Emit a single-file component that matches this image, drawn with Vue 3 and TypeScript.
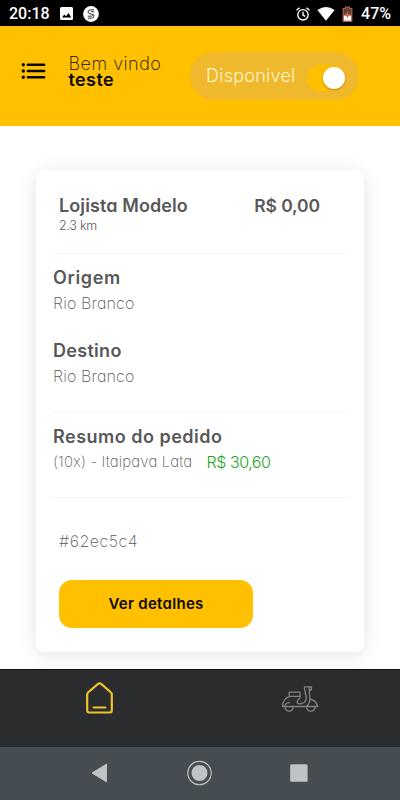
<script setup lang="ts">
import { ref } from 'vue'

interface Place {
  title: string
  value: string
}

const available = ref(true)
const places: Place[] = [
  { title: 'Origem', value: 'Rio Branco' },
  { title: 'Destino', value: 'Rio Branco' },
]
</script>

<template>
  <div class="screen">
    <div class="status">
      <span class="clock">20:18</span>
      <svg class="picture" width="13" height="13" viewBox="0 0 13 13">
        <rect width="13" height="13" rx="1.5" fill="#fff" />
        <path d="M2 10.5 4.3 7.4 6 9.3 8.5 6 11.3 10.5Z" fill="#000" />
      </svg>
      <svg class="badge" width="16" height="16" viewBox="0 0 16 16">
        <circle cx="8" cy="8" r="7.9" fill="#fff" />
        <path d="M11 3.8H7.4Q5 4 5 6 5.1 7.4 7 7.8L8.8 8.2Q10 8.6 9.6 9.6 9.2 10.2 8.4 10.2H4.8M11 5.7H7.9M4.8 12.2H8.4Q11 12 11 9.8 11 8.4 9.4 8" fill="none" stroke="#222" stroke-width=".9" />
      </svg>
      <span class="grow" />
      <svg width="14" height="14" viewBox="0 0 14 14" fill="none" stroke="#fff" stroke-width="1.4">
        <circle cx="7" cy="7.8" r="5.2" />
        <path d="M.5 3.2 3.6.7M13.5 3.2 10.4.7M7 4.8V8L9.2 9.4" />
      </svg>
      <svg class="wifi" width="18" height="14" viewBox="0 0 18 14">
        <path d="M.4 3Q9-2.8 17.6 3L9 13.8Z" fill="#fff" />
      </svg>
      <svg class="battery" width="11" height="16" viewBox="0 0 11 16">
        <path d="M3.5 1.2H7.5V2.5H9.8V15.3H1.2V2.5H3.5Z" fill="#504440" stroke="#b8593f" stroke-width="1.2" />
        <path d="M1.8 9.5H9.2V14.7H1.8Z" fill="#fff" />
        <path d="M5.5 5.2V11.5M2.6 8.7H8.4" stroke="#d85f3d" stroke-width="1.5" />
      </svg>
      <span class="percent">47%</span>
    </div>

    <header class="header">
      <svg class="menu" width="25" height="18" viewBox="0 0 25 18" fill="none" stroke="#0c0900" stroke-width="2.4" stroke-linecap="round">
        <path d="M6.8 2.7H23.2M6.8 9H23.2M6.8 15.3H23.2" />
        <path d="M2.3 2.7H2.31M2.3 9H2.31M2.3 15.3H2.31" stroke-width="3.4" />
      </svg>
      <div class="welcome">
        <span class="hello">Bem vindo</span>
        <strong class="user">teste</strong>
      </div>
      <div class="availability" @click="available = !available">
        <span class="availability-label">Disponivel</span>
        <span class="switch" :class="{ on: available }"><span class="knob" /></span>
      </div>
    </header>

    <main class="content">
      <article class="card">
        <div class="top">
          <div>
            <h2 class="title shop">Lojista Modelo</h2>
            <p class="distance">2.3 km</p>
          </div>
          <span class="title fee">R$ 0,00</span>
        </div>
        <section class="places">
          <div v-for="(place, i) in places" :key="place.title" class="place">
            <h3 class="title" :class="i === 0 ? 'origin' : 'destination'">{{ place.title }}</h3>
            <p class="text branch">{{ place.value }}</p>
          </div>
        </section>
        <section class="summary">
          <h3 class="title order">Resumo do pedido</h3>
          <p class="text line">
            <span class="item">(10x) - Itaipava Lata</span>
            <span class="price">R$ 30,60</span>
          </p>
        </section>
        <section class="bottom">
          <p class="text code">#62ec5c4</p>
          <button class="details">Ver detalhes</button>
        </section>
      </article>
    </main>

    <nav class="tabs">
      <div class="tab">
        <svg width="30" height="34" viewBox="0 0 30 34" fill="none" stroke="#efc22c" stroke-width="2.2" stroke-linecap="round" stroke-linejoin="round">
          <path d="M2.2 12.2Q2.2 11.2 3 10.5L13 1.9Q14.6.7 16.2 1.9L26 10.5Q26.8 11.2 26.8 12.2V28.5Q26.8 30.5 24.8 30.5H4.2Q2.2 30.5 2.2 28.5Z" />
          <path d="M8.6 25.5H20.4" />
        </svg>
      </div>
      <div class="tab">
        <svg width="38" height="28" viewBox="0 0 38 28" fill="none" stroke="#808283" stroke-width="1.3" stroke-linecap="round" stroke-linejoin="round">
          <path d="M8.2 7.2H19V11.3H8.2ZM9 11.3Q2 13 1.5 21.5H4M19 11.3V13Q16 15 16.2 17.8 17 19.5 21 18.5 25.5 17 25.2 12L23.5 4V1.8M24 1.8H30.7M28 1.8 28.8 13Q29 19 25.5 21.5H12.2M28.8 5H30.4V1.8M28.8 14Q35.5 15.5 36.8 21.5H34.2M4 21.5H12.2M25.5 21.5H34.2" />
          <path d="M4 21.5Q4.5 26.2 8.2 26.2 12 26.2 12.2 21.5M25.5 21.5Q25.8 26.2 29.8 26.2 33.8 26.2 34.2 21.5M4 21.5Q4.3 17.6 8.5 17.6" />
        </svg>
      </div>
    </nav>

    <div class="system">
      <svg width="17" height="20" viewBox="0 0 17 20"><path d="M15.5 1.2V18.8L1 10Z" fill="#bfc3c5" stroke="#bfc3c5" stroke-linejoin="round" /></svg>
      <svg width="26" height="26" viewBox="0 0 26 26"><circle cx="13.5" cy="13" r="11.7" fill="none" stroke="#bfc3c5" stroke-width="1.2" /><circle cx="13.5" cy="13" r="8" fill="#bfc3c5" /></svg>
      <svg width="18" height="18" viewBox="0 0 18 18"><rect x=".2" y=".3" width="17.4" height="17.4" rx="1.5" fill="#bfc3c5" /></svg>
    </div>
  </div>
</template>

<style>
body {
  margin: 0;
  background: #fff;
}
</style>

<style scoped>
.screen {
  width: 400px;
  height: 800px;
  display: flex;
  flex-direction: column;
  overflow: hidden;
  background: #fff;
  color: #58585a;
  font-family: Inter, 'Open Sans', sans-serif;
  font-feature-settings: 'cv11';
}
h2, h3, p {
  margin: 0;
}
svg {
  display: block;
  flex: none;
}
span, h2, h3, p, strong {
  white-space: nowrap;
}
.status {
  box-sizing: border-box;
  height: 26px;
  padding: 1px 9px 0;
  display: flex;
  align-items: center;
  flex: none;
  background: #000;
  color: #fff;
  font: 500 16px/26px Roboto, sans-serif;
}
.clock {
  width: 39px;
}
.picture {
  margin-left: 12px;
}
.badge {
  margin-left: 10px;
}
.grow {
  flex: 1;
}
.wifi {
  margin-left: 7px;
}
.battery {
  margin-left: 7px;
}
.percent {
  margin-left: 8px;
}
.header {
  box-sizing: border-box;
  height: 99.5px;
  padding: 26px 41.5px 0 21px;
  display: flex;
  align-items: flex-start;
  flex: none;
  background: #ffc000;
  color: #0c0900;
}
.menu {
  margin-top: 10px;
}
.welcome {
  margin: 4px 0 0 22.5px;
  display: flex;
  flex-direction: column;
  flex: 1;
}
.hello {
  font-size: 18px;
  font-weight: 250;
  line-height: 16px;
  letter-spacing: 0.5px;
}
.user {
  font-size: 18px;
  font-weight: 600;
  line-height: 16px;
  letter-spacing: 0.4px;
}
.availability {
  box-sizing: border-box;
  width: 168.5px;
  height: 48px;
  padding: 0 14px 0 16px;
  display: flex;
  align-items: center;
  justify-content: space-between;
  border-radius: 24px;
  background: #f0b82c;
}
.availability-label {
  margin-top: -2px;
  color: #fff7cf;
  font-size: 18px;
  font-weight: 300;
  letter-spacing: 0.25px;
}
.switch {
  box-sizing: border-box;
  width: 38px;
  height: 26px;
  margin-top: 4px;
  padding: 2px 0;
  display: flex;
  border-radius: 13px;
  background: #d9a832;
}
.switch.on {
  justify-content: flex-end;
  background: #ffc000;
}
.knob {
  width: 22px;
  height: 22px;
  border-radius: 50%;
  background: #fff;
  box-shadow: 0 1px 2px rgba(90, 60, 0, 0.4);
}
.content {
  flex: 1;
  padding: 44px 36px 0;
}
.card {
  box-sizing: border-box;
  height: 482.5px;
  padding: 0 17px;
  border-radius: 8px;
  background: #fff;
  box-shadow: 0 3px 20px rgba(0, 0, 0, 0.11);
}
.title {
  font-size: 18px;
  font-weight: 600;
  line-height: 24px;
}
.text {
  font-size: 16px;
  font-weight: 250;
  line-height: 24px;
}
.top {
  box-sizing: border-box;
  height: 84px;
  padding: 24px 27px 0 6px;
  display: flex;
  justify-content: space-between;
  border-bottom: 1px solid #f3f3f3;
}
.shop {
  letter-spacing: 0.1px;
}
.fee {
  font-size: 17.5px;
  letter-spacing: -0.1px;
}
.distance {
  font-size: 12.5px;
  font-weight: 300;
  line-height: 16px;
  letter-spacing: -0.25px;
}
.places {
  box-sizing: border-box;
  height: 159px;
  padding-top: 12px;
  display: flex;
  flex-direction: column;
  gap: 24px;
  border-bottom: 1px solid #f3f3f3;
}
.origin {
  letter-spacing: 0.65px;
}
.destination {
  letter-spacing: 0.3px;
}
.branch {
  margin-top: 1px;
  letter-spacing: 0.15px;
}
.summary {
  box-sizing: border-box;
  height: 85.5px;
  padding-top: 12px;
  border-bottom: 1px solid #f3f3f3;
}
.order {
  letter-spacing: 0.5px;
}
.line {
  display: flex;
  margin-top: 1px;
}
.item {
  width: 153.5px;
  font-size: 15px;
  letter-spacing: 0.12px;
}
.price {
  color: #1ea51e;
  font-weight: 300;
  letter-spacing: -0.45px;
}
.bottom {
  padding: 31px 6px 0;
}
.code {
  letter-spacing: 0.5px;
}
.details {
  display: block;
  width: 194px;
  height: 48px;
  margin-top: 27px;
  padding: 0 0 1px;
  border: 0;
  border-radius: 13px;
  background: #ffc000;
  color: #0c0900;
  font: 600 15px Inter, sans-serif;
  font-feature-settings: 'cv11';
  letter-spacing: 0.3px;
}
.tabs {
  box-sizing: border-box;
  height: 78px;
  display: flex;
  flex: none;
  border-top: 1px solid #111313;
  background: #2a2c2e;
}
.tab {
  width: 50%;
  display: flex;
  justify-content: center;
  align-items: flex-start;
  padding-top: 12px;
}
.tab + .tab {
  padding-top: 15px;
}
.system {
  box-sizing: border-box;
  height: 53.5px;
  padding: 0 92px 0 91px;
  display: flex;
  align-items: center;
  justify-content: space-between;
  flex: none;
  background: #454d53;
}
</style>
